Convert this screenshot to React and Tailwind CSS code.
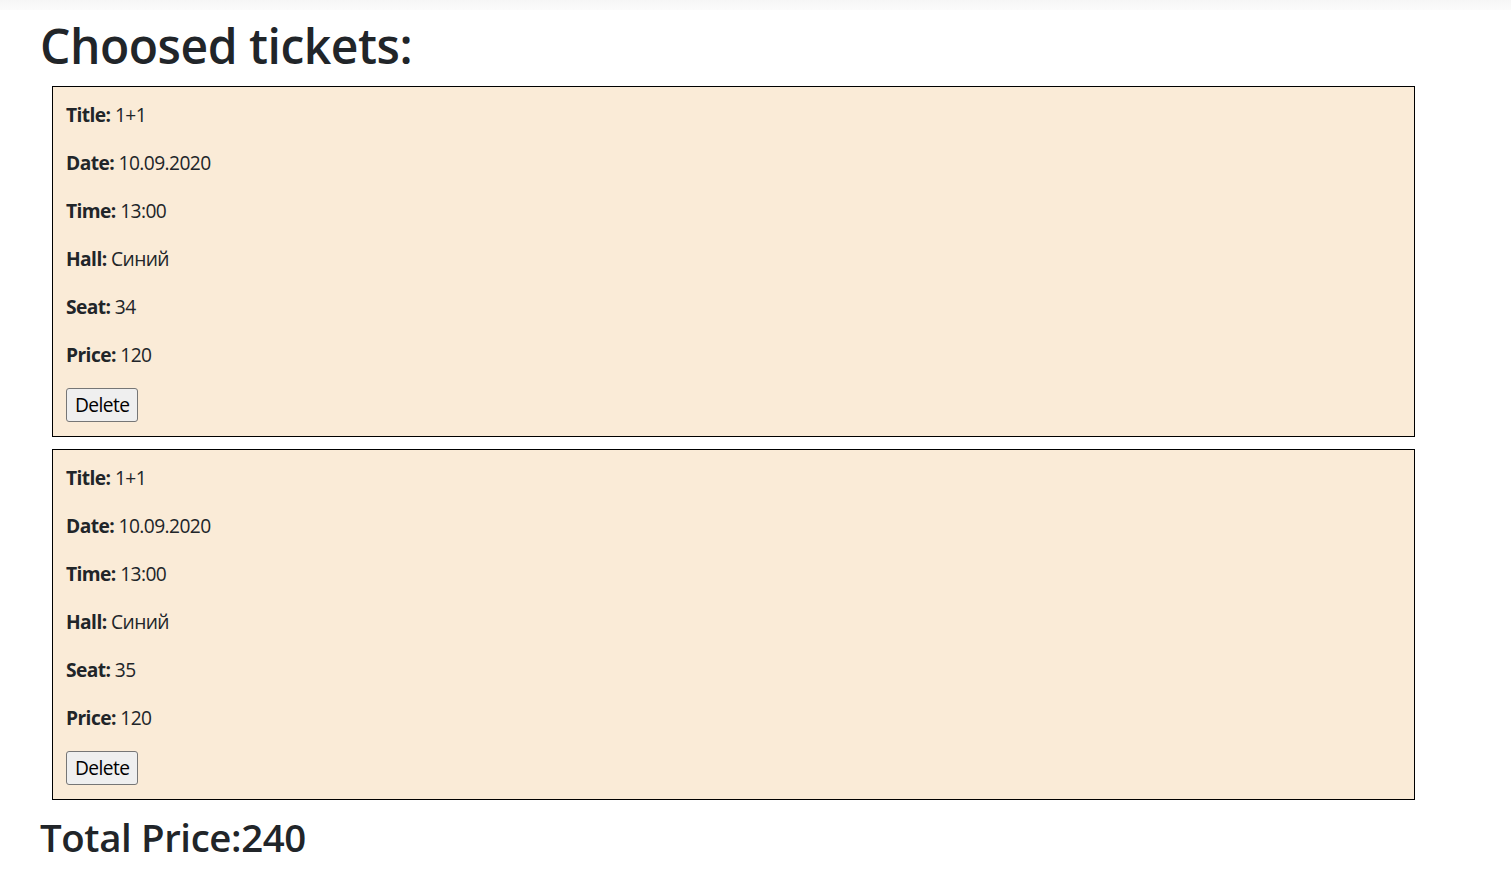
import React, { useState } from "react";

const initialTickets = [
  { id: 1, title: "1+1", date: "10.09.2020", time: "13:00", hall: "Синий", seat: 34, price: 120 },
  { id: 2, title: "1+1", date: "10.09.2020", time: "13:00", hall: "Синий", seat: 35, price: 120 },
];

const Row = ({ label, value }) => (
  <p className="mb-[19px] leading-[29px]">
    <b className="font-bold">{label}:</b> {value}
  </p>
);

const App = () => {
  const [tickets, setTickets] = useState(initialTickets);

  const total = tickets.reduce((sum, t) => sum + t.price, 0);

  return (
    <div
      className="min-h-screen bg-white text-[#212529] text-[19.2px]"
      style={{ fontFamily: '"Open Sans", "Noto Sans", sans-serif' }}
    >
      <div className="h-[10px] bg-gradient-to-b from-[#f6f6f6] to-[#fbfbfb]" />
      <div className="px-[40px]">
        <h1 className="text-[48px] leading-[58px] font-semibold tracking-[-0.01em] mt-[7px] mb-[11px]">
          Choosed tickets:
        </h1>

        <div className="flex flex-col gap-[12px] ml-[12px] w-[1363px]">
          {tickets.map((t) => (
            <div
              key={t.id}
              className="border border-black bg-[#faebd7] pt-[13px] px-[13px] pb-[14px] tracking-[-0.03em]"
            >
              <Row label="Title" value={t.title} />
              <Row label="Date" value={t.date} />
              <Row label="Time" value={t.time} />
              <Row label="Hall" value={t.hall} />
              <Row label="Seat" value={t.seat} />
              <Row label="Price" value={t.price} />
              <button
                onClick={() => setTickets(tickets.filter((x) => x.id !== t.id))}
                className="h-[34px] px-[8px] bg-[#efefef] border border-[#767676] rounded-[3px] text-black"
              >
                Delete
              </button>
            </div>
          ))}
        </div>

        <h2 className="text-[38.4px] leading-[46px] font-semibold tracking-[-0.01em] mt-[14px]">
          Total Price:{total}
        </h2>
      </div>
    </div>
  );
};

export default App;
